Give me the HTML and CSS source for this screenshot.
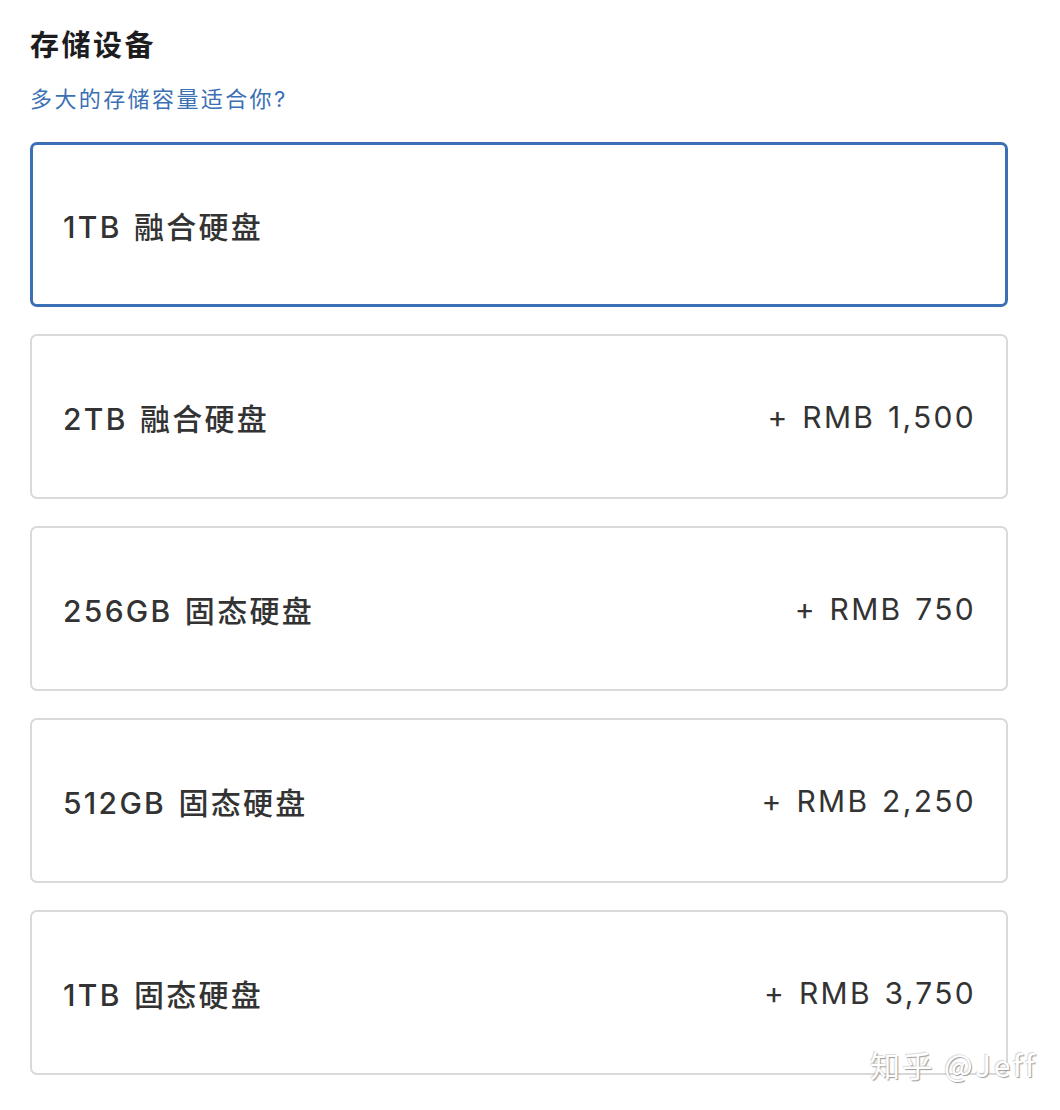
FILE: index.html
```html
<!DOCTYPE html>
<html lang="zh-CN">
<head>
  <meta charset="UTF-8" />
  <meta name="viewport" content="width=device-width, initial-scale=1.0" />
  <title>存储设备</title>
  <link rel="stylesheet" href="styles.css">
</head>
<body>
  <div class="storage">
    <h1 class="title">存储设备</h1>
    <a class="help-link">多大的存储容量适合你?</a>

    <div class="options">
      <div class="option selected">
        <span class="name">1TB 融合硬盘</span>
      </div>
      <div class="option">
        <span class="name">2TB 融合硬盘</span>
        <span class="price">+ RMB 1,500</span>
      </div>
      <div class="option">
        <span class="name">256GB 固态硬盘</span>
        <span class="price">+ RMB 750</span>
      </div>
      <div class="option">
        <span class="name">512GB 固态硬盘</span>
        <span class="price">+ RMB 2,250</span>
      </div>
      <div class="option">
        <span class="name">1TB 固态硬盘</span>
        <span class="price">+ RMB 3,750</span>
      </div>
    </div>
  </div>

  <!-- watermark -->
  <div class="watermark">知乎 @Jeff</div>
</body>
</html>
```

FILE: styles.css
```css
html, body {
  margin: 0;
  padding: 0;
  background: #fff;
  font-family: Inter, "Noto Sans CJK SC", sans-serif;
  color: #333;
}

.storage {
  padding: 28px 52px 0 30px;
}

.title {
  margin: 0;
  font-size: 29px;
  line-height: 36px;
  font-weight: 700;
  color: #1d1d1f;
  letter-spacing: 2.5px;
}

.help-link {
  display: block;
  margin-top: 20px;
  font-size: 22px;
  line-height: 30px;
  color: #3b70b5;
  letter-spacing: 2.4px;
}

.options {
  display: flex;
  flex-direction: column;
  gap: 27px;
  margin-top: 28px;
}

.option {
  box-sizing: border-box;
  height: 165px;
  display: flex;
  align-items: center;
  justify-content: space-between;
  padding: 0 30px 0 31px;
  border: 2px solid #d9d9d9;
  border-radius: 7px;
  font-size: 30px;
  font-weight: 500;
  letter-spacing: 2.3px;
  word-spacing: 2px;
  color: #333;
}

.option.selected {
  border: 3px solid #3b6fb6;
  padding: 0 29px 0 30px;
}

.price {
  font-weight: 400;
}

.watermark {
  position: absolute;
  left: 870px;
  top: 1042px;
  font-family: "Noto Sans CJK SC", sans-serif;
  font-size: 30px;
  color: #fff;
  text-shadow: 1px 1px 1px #9a9a9a, -1px -1px 1px rgba(0, 0, 0, 0.15);
  letter-spacing: 2.5px;
}
```
